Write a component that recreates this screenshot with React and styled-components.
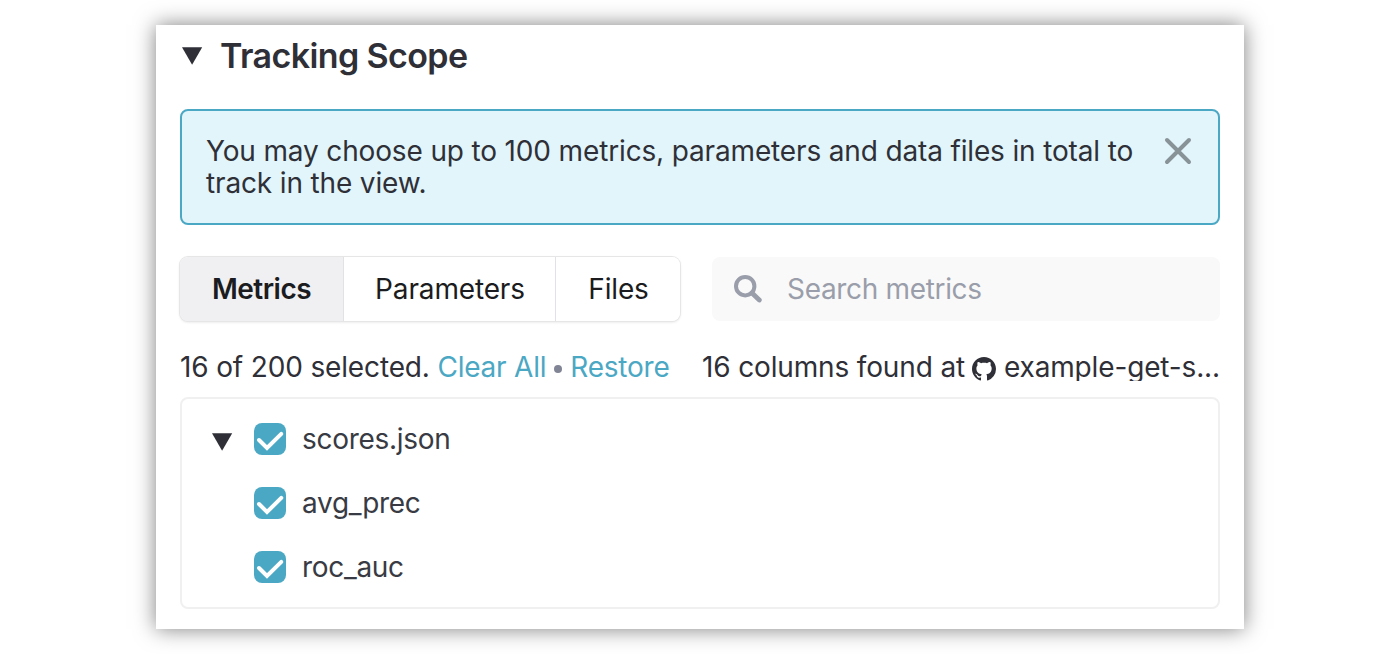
import React from "react";
import styled, { createGlobalStyle, css } from "styled-components";

const GlobalStyle = createGlobalStyle`
  * { box-sizing: border-box; }
  html, body { margin: 0; background: #fff; }
  body {
    font-family: Inter, "Liberation Sans", sans-serif;
    font-size: 28px;
    line-height: 32px;
    letter-spacing: -0.15px;
    color: #2f3037;
    -webkit-font-smoothing: antialiased;
  }
  button, input { font: inherit; letter-spacing: inherit; }
`;

const Page = styled.main`
  height: 654px;
  padding: 25px 156px;
  overflow: hidden;
`;

const Panel = styled.section`
  height: 604px;
  padding: 0 24px;
  background: #fff;
  box-shadow: 0 0 20px rgba(0, 0, 0, 0.5);
`;

const Header = styled.header`
  display: flex;
  align-items: center;
  gap: 17px;
  height: 84px;
  padding: 0 0 23px 2px;
`;

const Title = styled.h2`
  margin: 0;
  font-size: 34px;
  line-height: 40px;
  font-weight: 600;
  letter-spacing: -0.6px;
`;

const Triangle = styled.svg`
  display: block;
  flex: none;
  width: 21px;
  height: 18px;
  fill: currentColor;
`;

const Notice = styled.div`
  display: flex;
  justify-content: space-between;
  height: 116px;
  padding: 24px;
  border: 2px solid #4ba8c4;
  border-radius: 8px;
  background: #e2f5fb;
`;

const NoticeText = styled.p`
  width: 940px;
  margin: 0;
`;

const CloseButton = styled.button`
  display: flex;
  width: 32px;
  height: 32px;
  padding: 0;
  border: 0;
  background: none;
  color: #889398;
`;

const Controls = styled.div`
  display: flex;
  gap: 32px;
  margin-top: 32px;
`;

const Tabs = styled.div`
  display: flex;
  width: 500px;
  height: 64px;
  border-radius: 8px;
  box-shadow: 0 0 0 1px #e6e6e7, 0 1px 3px rgba(0, 0, 0, 0.14);
`;

const Tab = styled.button`
  width: ${(p) => p.$width}px;
  padding: 0 0 0 1px;
  border: 0;
  border-left: 1px solid #e2e2e4;
  background: #fff;
  color: #1b1c20;
  &:first-child { padding: 0; border-left: 0; border-radius: 8px 0 0 8px; }
  &:last-child { border-radius: 0 8px 8px 0; }
  ${(p) => p.$active && css`
    background: #f0f0f3;
    font-weight: 600;
    letter-spacing: -0.5px;
  `}
`;

const Search = styled.label`
  display: flex;
  align-items: center;
  flex: 1;
  gap: 25px;
  height: 64px;
  padding-left: 22px;
  border-radius: 8px;
  background: #f9f9f9;
  color: #9a9eaa;
`;

const SearchInput = styled.input`
  width: 400px;
  padding: 0;
  border: 0;
  outline: 0;
  background: transparent;
  letter-spacing: -0.33px;
  &::placeholder { color: #9a9eaa; opacity: 1; }
`;

const Summary = styled.div`
  display: flex;
  justify-content: space-between;
  height: 28px;
  margin-top: 32px;
  line-height: 29px;
  white-space: nowrap;
`;

const Selection = styled.div`
  display: flex;
`;

const Link = styled.a`
  color: #4ba8c4;
  letter-spacing: -0.22px;
`;

const Dot = styled.span`
  width: 8px;
  height: 8px;
  margin: 12px 8px 0;
  border-radius: 50%;
  background: #808495;
`;

const Source = styled.div`
  display: flex;
  width: 518px;
  overflow: hidden;
`;

const SourceIcon = styled.svg`
  flex: none;
  width: 24px;
  height: 24px;
  margin: 4px 8px 0 7px;
  fill: currentColor;
`;

const Tree = styled.ul`
  height: 212px;
  margin: 16px 0 0;
  padding: 8px 30px;
  border: 2px solid #f0f0f0;
  border-radius: 8px;
  list-style: none;
`;

const TreeRow = styled.li`
  display: flex;
  align-items: center;
  height: 64px;
  letter-spacing: -0.3px;
  color: #383b43;
`;

const Toggle = styled.span`
  width: 42px;
  padding-top: 6px;
  color: #2f3037;
`;

const CheckBox = styled.span`
  width: 32px;
  height: 32px;
  margin-right: 16px;
  border-radius: 8px;
  background: #4ba8c4;
`;

const TriangleIcon = () => (
  <Triangle viewBox="0 0 21 18"><path d="M0 0.3H20.2L10.1 17.8Z" /></Triangle>
);

const ROWS = [
  { name: "scores.json", expandable: true },
  { name: "avg_prec" },
  { name: "roc_auc" },
];

export default function App() {
  return (
    <Page>
      <GlobalStyle />
      <Panel>
        <Header>
          <TriangleIcon />
          <Title>Tracking Scope</Title>
        </Header>
        <Notice>
          <NoticeText>
            You may choose up to 100 metrics, parameters and data files in total to track in the view.
          </NoticeText>
          <CloseButton aria-label="Close">
            <svg width="32" height="32" viewBox="0 0 32 32" fill="none" stroke="currentColor" strokeWidth="4" strokeLinecap="round">
              <path d="M5 5L27 27M27 5L5 27" />
            </svg>
          </CloseButton>
        </Notice>
        <Controls>
          <Tabs>
            <Tab $width={163} $active>Metrics</Tab>
            <Tab $width={212}>Parameters</Tab>
            <Tab $width={125}>Files</Tab>
          </Tabs>
          <Search>
            <svg width="28" height="28" viewBox="0 0 28 28" fill="none" stroke="currentColor" strokeWidth="4" strokeLinecap="round">
              <circle cx="11.2" cy="11.2" r="9.2" />
              <path d="M18 18L25.3 25" strokeWidth="4.8" />
            </svg>
            <SearchInput placeholder="Search metrics" />
          </Search>
        </Controls>
        <Summary>
          <Selection>
            <span>16 of 200 selected.&nbsp;</span>
            <Link>Clear All</Link>
            <Dot />
            <Link>Restore</Link>
          </Selection>
          <Source>
            <span>16 columns found at</span>
            <SourceIcon viewBox="0 0 16 16">
              <path d="M8 0C3.58 0 0 3.58 0 8c0 3.54 2.29 6.53 5.47 7.59.4.07.55-.17.55-.38 0-.19-.01-.82-.01-1.49-2.01.37-2.53-.49-2.69-.94-.09-.23-.48-.94-.82-1.13-.28-.15-.68-.52-.01-.53.63-.01 1.08.58 1.23.82.72 1.21 1.87.87 2.33.66.07-.52.28-.87.51-1.07-1.78-.2-3.64-.89-3.64-3.95 0-.87.31-1.59.82-2.15-.08-.2-.36-1.02.08-2.12 0 0 .67-.21 2.2.82.64-.18 1.32-.27 2-.27s1.36.09 2 .27c1.53-1.04 2.2-.82 2.2-.82.44 1.1.16 1.92.08 2.12.51.56.82 1.27.82 2.15 0 3.07-1.87 3.75-3.65 3.95.29.25.54.73.54 1.48 0 1.07-.01 1.93-.01 2.2 0 .21.15.46.55.38A8.01 8.01 0 0 0 16 8c0-4.42-3.58-8-8-8Z" />
            </SourceIcon>
            <span>example-get-s...</span>
          </Source>
        </Summary>
        <Tree>
          {ROWS.map((row) => (
            <TreeRow key={row.name}>
              <Toggle>{row.expandable && <TriangleIcon />}</Toggle>
              <CheckBox>
                <svg width="32" height="32" viewBox="0 0 32 32" fill="none" stroke="#fff" strokeWidth="4" strokeLinecap="round">
                  <path d="M5 17L13 25L27.3 10.8" />
                </svg>
              </CheckBox>
              <span>{row.name}</span>
            </TreeRow>
          ))}
        </Tree>
      </Panel>
    </Page>
  );
}
